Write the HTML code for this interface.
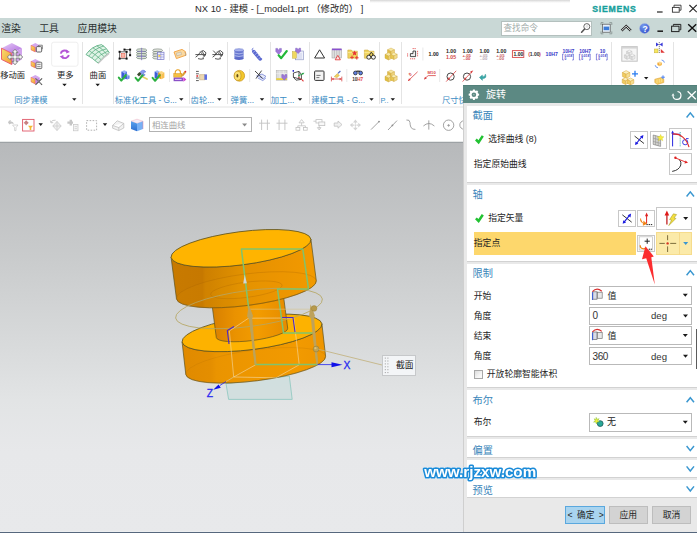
<!DOCTYPE html>
<html lang="zh-CN"><head><meta charset="utf-8"><title>NX 10</title>
<style>
html,body{margin:0;padding:0}
body{width:697px;height:533px;overflow:hidden;position:relative;background:#fff;
 font-family:"Liberation Sans","Noto Sans CJK SC",sans-serif;font-size:9px;color:#222;line-height:1}
#root{position:absolute;left:0;top:0;width:697px;height:533px;overflow:hidden}
.a{position:absolute;white-space:nowrap}
svg{position:absolute;left:0;top:0;overflow:visible}
#menubar{left:0;top:18px;width:697px;height:20.6px;background:#c9d8d6}
#menubar span{position:absolute;top:6px;font-size:9.8px;color:#2a3030}
#ribbon{left:0;top:38px;width:697px;height:68px;background:#fff}
#ribsep{left:0;top:105.6px;width:697px;height:2.6px;background:#f1f1f1}
#toolbar{left:0;top:108px;width:697px;height:33px;background:#fff}
#view{left:0;top:143px;width:697px;height:390px;
 background:linear-gradient(to bottom,#b7b9bb 0%,#c8cacb 27.5%,#d9dbdc 53%,#e2e4e5 66%,#e7e8ea 79%,#e8e9eb 100%)}
.glabel{position:absolute;font-size:8.3px;color:#3b8cc4;top:96.4px;white-space:nowrap}
.rl{position:absolute;font-size:8.3px;color:#222;top:71.4px;white-space:nowrap}
.gsep{position:absolute;top:42px;width:1px;height:61.5px;background:#e4e4e4}
.tri{position:absolute;width:0;height:0;border-left:3px solid transparent;border-right:3px solid transparent;border-top:3px solid #222}

#dlg{left:463px;top:85px;width:234px;height:447px;background:#e9e9e9;border-left:1px solid #cfcfcf;box-sizing:border-box}
#dhead{left:463px;top:85.3px;width:234px;height:17.8px;background:#5c8983;border-top:1px solid #52807a;box-sizing:border-box}
.sec{position:absolute;left:467.2px;width:230px;background:#fff;border-bottom:1px solid #d2d2d2;box-sizing:border-box}
.st{position:absolute;left:472.6px;font-size:10.2px;color:#3a86ba;white-space:nowrap}
.lb{position:absolute;font-size:8.8px;color:#242424;white-space:nowrap}
.box{position:absolute;left:589px;width:103px;border:1px solid #b9b9b9;box-sizing:border-box;background:#fff}
.btn{position:absolute;border:1px solid #c8c8c8;box-sizing:border-box;background:#fff}
</style></head>
<body>
<div id="root">
<div class="a" id="titlebar" style="left:0;top:0;width:697px;height:18px;background:#fff"></div>
<div class="a" style="left:370px;top:0;width:200px;height:3px;background:linear-gradient(to bottom,#d6d6d6,#f2f2f2 60%,#fff)"></div>
<div class="a" id="ttl" style="left:195px;top:4px;font-size:9.4px;color:#2a2a2a">NX 10 - 建模 - [_model1.prt （修改的） ]</div>
<div class="a" id="siem" style="left:592.3px;top:4.8px;font-size:8.7px;font-weight:bold;color:#17a09c;letter-spacing:0.75px;-webkit-text-stroke:0.35px #17a09c">SIEMENS</div>
<div class="a" id="menubar"><span style="left:1.3px">渲染</span><span style="left:39.3px">工具</span><span style="left:77.6px">应用模块</span></div>
<div class="a" id="ribbon"></div><div class="a" id="ribsep"></div><div class="a" id="toolbar"></div>
<div class="a" style="left:501px;top:20.5px;width:91px;height:15.5px;background:#fff;border:1px solid #b4c0be;box-sizing:border-box"></div>
<div class="a" style="left:503.5px;top:24px;font-size:8.6px;color:#a0aaa8">查找命令</div>
<div class="glabel" style="left:14.3px">同步建模</div>
<div class="glabel" style="left:114.7px">标准化工具 - G...</div>
<div class="glabel" style="left:190.6px">齿轮...</div>
<div class="glabel" style="left:230.6px">弹簧...</div>
<div class="glabel" style="left:270.8px">加工...</div>
<div class="glabel" style="left:311.2px">建模工具 - G...</div>
<div class="glabel" style="left:442px">尺寸快速</div>
<div class="glabel" style="left:380.4px;font-size:7.4px;top:97px">P..</div>
<div class="gsep" style="left:82px"></div>
<div class="gsep" style="left:113px"></div>
<div class="gsep" style="left:189px"></div>
<div class="gsep" style="left:227.4px"></div>
<div class="gsep" style="left:270px"></div>
<div class="gsep" style="left:308.5px"></div>
<div class="gsep" style="left:379.4px"></div>
<div class="gsep" style="left:401px"></div>
<div class="gsep" style="left:611.3px"></div>
<div class="gsep" style="left:673.4px"></div>
<div class="rl" style="left:0.2px">移动面</div>
<div class="rl" style="left:57px">更多</div>
<div class="rl" style="left:89.6px">曲面</div>
<div class="a" style="left:149px;top:117px;width:102.5px;height:15px;border:1px solid #b2b2b2;box-sizing:border-box;background:#fff"></div>
<div class="a" style="left:152px;top:120.5px;font-size:8.4px;color:#a4a4a4">相连曲线</div>
<svg width="697" height="145" viewBox="0 0 697 145">
<defs>
<linearGradient id="pt" x1="0" y1="0" x2="1" y2="1"><stop offset="0" stop-color="#e6ccf6"/><stop offset="1" stop-color="#b06ce0"/></linearGradient>
<linearGradient id="pl" x1="0" y1="0" x2="1" y2="1"><stop offset="0" stop-color="#f7e070"/><stop offset="1" stop-color="#f09a30"/></linearGradient>
<linearGradient id="pr" x1="0" y1="0" x2="1" y2="1"><stop offset="0" stop-color="#c48ae8"/><stop offset="1" stop-color="#dcb8f2"/></linearGradient>
<linearGradient id="bl" x1="0" y1="0" x2="0" y2="1"><stop offset="0" stop-color="#5aa2ee"/><stop offset="1" stop-color="#2f6fd0"/></linearGradient>
<radialGradient id="hp" cx="0.4" cy="0.3" r="0.8"><stop offset="0" stop-color="#7aa0f0"/><stop offset="1" stop-color="#2848c8"/></radialGradient>
</defs>
<polygon points="1.5,48.2 11.8,43.0 22.0,48.2 11.8,53.3" fill="url(#pt)"/><polygon points="1.5,48.2 11.8,53.3 11.8,64.5 1.5,59.4" fill="url(#pl)"/><polygon points="11.8,53.3 22.0,48.2 22.0,59.4 11.8,64.5" fill="url(#pr)"/>
<polygon points="1.5,48.2 11.7,53.3 11.7,64.5 1.5,59.4" fill="none" stroke="#e8506a" stroke-width="0.9"/>
<path d="M15 49.2 l3 3.4 h-1.9 v3.3 h3.3 v-1.9 l3.4 3 l-3.4 3 v-1.9 h-3.3 v3.3 h1.9 l-3 3.4 l-3-3.4 h1.9 v-3.3 h-3.3 v1.9 l-3.4-3 l3.4-3 v1.9 h3.3 v-3.3 h-1.9 z" fill="#f4f4f4" stroke="#7c7c7c" stroke-width="0.9" stroke-linejoin="round"/>
<polygon points="31.0,45.2 35.3,43.0 39.6,45.2 35.3,47.3" fill="#d4a8ee"/><polygon points="31.0,45.2 35.3,47.3 35.3,52.0 31.0,49.9" fill="url(#pl)"/><polygon points="35.3,47.3 39.6,45.2 39.6,49.9 35.3,52.0" fill="#c48ae8"/>
<polygon points="31,45.2 35.3,47.4 35.3,52.0 31,49.8" fill="none" stroke="#e8506a" stroke-width="0.5"/>
<rect x="36.3" y="46.6" width="5.4" height="5.4" rx="1" fill="#f6f6f6" stroke="#555" stroke-width="0.9"/>
<path d="M37.5 46.6 l1.2 -1.4 h3.6 v4" fill="none" stroke="#555" stroke-width="0.7"/>
<polygon points="31.0,61.2 35.3,59.0 39.6,61.2 35.3,63.3" fill="#d4a8ee"/><polygon points="31.0,61.2 35.3,63.3 35.3,68.0 31.0,65.9" fill="url(#pl)"/><polygon points="35.3,63.3 39.6,61.2 39.6,65.9 35.3,68.0" fill="#c48ae8"/>
<polygon points="31,61.2 35.3,63.4 35.3,68.0 31,65.8" fill="none" stroke="#e8506a" stroke-width="0.5"/>
<rect x="36" y="62.2" width="5.8" height="6.4" rx="0.8" fill="#f0f0f0" stroke="#666" stroke-width="0.9"/>
<path d="M37.2 64.4 h3.4 M37.2 66.6 h3.4" stroke="#777" stroke-width="0.8"/>
<polygon points="31.0,77.2 35.3,75.0 39.6,77.2 35.3,79.3" fill="#d4a8ee"/><polygon points="31.0,77.2 35.3,79.3 35.3,84.0 31.0,81.9" fill="url(#pl)"/><polygon points="35.3,79.3 39.6,77.2 39.6,81.9 35.3,84.0" fill="#c48ae8"/>
<polygon points="31,77.2 35.3,79.4 35.3,84.0 31,81.8" fill="none" stroke="#e8506a" stroke-width="0.5"/>
<path d="M35.5 78.4 l6.6 6.4 M42.1 78.4 l-6.6 6.4" stroke="#555" stroke-width="1.1"/>
<path d="M36.5 79.4 l4.6 4.4" stroke="#bbb" stroke-width="0.5"/>
<rect x="51.6" y="42.2" width="26.4" height="24" rx="2.2" fill="#fff" stroke="#ececec" stroke-width="0.9"/>
<path d="M60.8 53.6 a3.9 3.6 0 0 1 6.4 -2.2" fill="none" stroke="#b455d6" stroke-width="1.9"/>
<polygon points="66.2,49.4 69.9,52 66.2,53.6" fill="#b455d6"/>
<path d="M68.8 55 a3.9 3.6 0 0 1 -6.4 2.2" fill="none" stroke="#b455d6" stroke-width="1.9"/>
<polygon points="63.4,59.2 59.7,56.6 63.4,55" fill="#b455d6"/>
<polygon points="62.3,83.7 66.7,83.7 64.5,86.3" fill="#1a1a1a"/>
<polygon points="72.1,98.2 76.5,98.2 74.3,100.8" fill="#1a1a1a"/>
<path d="M86 54.5 Q92 46 101.5 44.6 Q106 47 109.3 52.6 Q104 56 98 63 Q92.5 58 86 54.5 Z" fill="#dff3e6" stroke="#4fa878" stroke-width="0.8" stroke-linejoin="round"/>
<path d="M89.2 50.8 Q95 54 101 59.6 M92.8 47.8 Q99 51 104 56.6 M96.8 45.8 Q102.5 48.6 106.8 54.4 M88.8 56 Q94.5 48.5 103.8 45.9 M91.8 58 Q97 51 106 49 M95 60.4 Q100 54 108 51" fill="none" stroke="#4fa878" stroke-width="0.7"/>
<path d="M98 63 Q104 56 109.3 52.6 L109.3 54.2 Q104 57.6 98.3 64.3 Z" fill="#c8c8c8"/>
<polygon points="95.5,83.7 99.9,83.7 97.7,86.3" fill="#1a1a1a"/>
<rect x="121.2" y="53.6" width="3.8" height="3.6" fill="#f8b8a8" stroke="#e86050" stroke-width="0.6"/>
<path d="M119.6 51.8 h7 v6.8 h-7 z M124.5 49.6 h5.6 v5.6" fill="none" stroke="#222" stroke-width="0.7"/>
<rect x="118.6" y="50.8" width="2" height="2" fill="#111"/>
<rect x="125.6" y="50.8" width="2" height="2" fill="#111"/>
<rect x="118.6" y="57.6" width="2" height="2" fill="#111"/>
<rect x="125.6" y="57.6" width="2" height="2" fill="#111"/>
<rect x="123.5" y="48.6" width="2" height="2" fill="#111"/>
<rect x="129.1" y="48.6" width="2" height="2" fill="#111"/>
<rect x="129.1" y="54.2" width="2" height="2" fill="#111"/>
<ellipse cx="141.6" cy="50.2" rx="5.2" ry="1.5" fill="#dfe6dc" stroke="#5a7060" stroke-width="0.6"/>
<ellipse cx="141.6" cy="52.6" rx="5.2" ry="1.5" fill="#dfe6dc" stroke="#5a7060" stroke-width="0.6"/>
<ellipse cx="141.6" cy="55.0" rx="5.2" ry="1.5" fill="#dfe6dc" stroke="#5a7060" stroke-width="0.6"/>
<ellipse cx="141.6" cy="57.4" rx="5.2" ry="1.5" fill="#dfe6dc" stroke="#5a7060" stroke-width="0.6"/>
<path d="M141.6 47.8 v12.4" stroke="#7868c0" stroke-width="0.7"/>
<path d="M137 51.6 h9.2 M137 56.4 h9.2" stroke="#6a58c8" stroke-width="0.4"/>
<ellipse cx="157.6" cy="50.4" rx="5" ry="1.5" fill="#e4e8e2" stroke="#687468" stroke-width="0.6"/>
<ellipse cx="157.6" cy="52.8" rx="5" ry="1.5" fill="#e4e8e2" stroke="#687468" stroke-width="0.6"/>
<ellipse cx="157.6" cy="55.2" rx="5" ry="1.5" fill="#e4e8e2" stroke="#687468" stroke-width="0.6"/>
<ellipse cx="157.6" cy="57.6" rx="5" ry="1.5" fill="#e4e8e2" stroke="#687468" stroke-width="0.6"/>
<rect x="157.6" y="52.2" width="6.4" height="7.4" fill="#eef0ff" stroke="#7878c8" stroke-width="0.7"/>
<path d="M157.6 54.6 h6.4 M157.6 57 h6.4 M160.8 52.2 v7.4" stroke="#7878c8" stroke-width="0.5"/>
<rect x="158.4" y="55" width="2" height="1.8" fill="#f0d040"/>
<rect x="169" y="47.5" width="1" height="13" fill="#e8e8e8"/>
<path d="M174 52 l8 -2.6 l3.4 2.2 l0.6 3.6 l-9.6 3.4 z" fill="#fbd9a0" stroke="#f0a040" stroke-width="0.9" stroke-linejoin="round"/>
<rect x="176.4" y="52.6" width="5" height="2.6" fill="#e8e0d0" stroke="#b0a080" stroke-width="0.4" transform="rotate(-16 178.9 53.9)"/>
<path d="M184.6 52.4 q1.6 1 1 3.6" fill="none" stroke="#999" stroke-width="0.6"/>
<polygon points="121.4,71.6 124.2,70.2 127.0,71.6 124.2,73.0" fill="#9ab4f4"/><polygon points="121.4,71.6 124.2,73.0 124.2,79.6 121.4,78.2" fill="#3c5cd8"/><polygon points="124.2,73.0 127.0,71.6 127.0,78.2 124.2,79.6" fill="#6080e6"/>
<polygon points="125.0,75.4 127.3,74.2 129.6,75.4 127.3,76.5" fill="#9ab4f4"/><polygon points="125.0,75.4 127.3,76.5 127.3,79.6 125.0,78.5" fill="#4464dc"/><polygon points="127.3,76.5 129.6,75.4 129.6,78.5 127.3,79.6" fill="#6a8aea"/>
<path d="M118.8 77.6 l2.5 3 l4.6 -5.6" fill="none" stroke="#2bb040" stroke-width="2.0" stroke-linecap="round" stroke-linejoin="round"/>
<path d="M141 76 l6 3" stroke="#e4d468" stroke-width="1.7" stroke-linecap="round"/>
<path d="M141.2 75.6 a3 3 0 1 1 4.6 -3.6 l-2 0.4 l-0.2 1.6 l1.6 0.8 a3 3 0 0 1 -4 0.8 z" fill="#8c9cf0" stroke="#5068d0" stroke-width="0.5"/>
<path d="M137 74.4 l2.4 -2.4 l2 1.8 l-2.4 2.6 z" fill="#3c4c30"/>
<path d="M135.6 77.8 l2.5 3 l4.6 -5.6" fill="none" stroke="#2bb040" stroke-width="2.0" stroke-linecap="round" stroke-linejoin="round"/>
<polygon points="154.6,71.5 157.1,70.2 159.6,71.5 157.1,72.7" fill="#9ab4f4"/><polygon points="154.6,71.5 157.1,72.7 157.1,79.2 154.6,78.0" fill="#3c5cd8"/><polygon points="157.1,72.7 159.6,71.5 159.6,78.0 157.1,79.2" fill="#6080e6"/>
<polygon points="158.2,72.5 161.3,71.0 164.4,72.5 161.3,74.1" fill="#fbd680"/><polygon points="158.2,72.5 161.3,74.1 161.3,79.2 158.2,77.7" fill="#f0a020"/><polygon points="161.3,74.1 164.4,72.5 164.4,77.7 161.3,79.2" fill="#f8c050"/>
<path d="M152.6 77.8 l2.5 3 l4.6 -5.6" fill="none" stroke="#2bb040" stroke-width="2.0" stroke-linecap="round" stroke-linejoin="round"/>
<rect x="169" y="69" width="1" height="13" fill="#e8e8e8"/>
<path d="M175.2 74 v-1.6 a2.6 2.6 0 0 1 5.2 0 v1.6" fill="none" stroke="#e8a020" stroke-width="1.1"/>
<rect x="173.8" y="73.6" width="8" height="3.6" fill="#f4c040" stroke="#d89018" stroke-width="0.5"/>
<path d="M181.6 75.2 l3 -3.6 l1.2 1 l-3 3.6 z" fill="#e8a830" stroke="#b07010" stroke-width="0.4"/>
<circle cx="185.4" cy="71.6" r="0.9" fill="#e03030"/>
<rect x="173.6" y="77.6" width="9.6" height="3.6" fill="#8a50c8"/>
<path d="M175 79.4 h6.6" stroke="#e8d8f8" stroke-width="1"/>
<polygon points="183.4,77 186.4,79.4 183.4,81.8" fill="#d040d0"/>
<polygon points="179.1,98.2 183.5,98.2 181.3,100.8" fill="#1a1a1a"/>
<path d="M195.6 57.2 q2.4 -1.2 4.2 -4.4 q1.2 -2 3.6 -2.2 l2.6 2.2 q-0.4 3.6 -3.4 5 M195.4 54.6 h10.4 M198.0 58.6 q3 1.2 6 0" fill="none" stroke="#2a2a2a" stroke-width="0.8"/>
<path d="M200.2 51.6 l3.6 4.4 M202.0 51 l2.8 5" stroke="#555" stroke-width="0.9"/>
<path d="M212.6 57.2 q2.4 -1.2 4.2 -4.4 q1.2 -2 3.6 -2.2 l2.6 2.2 q-0.4 3.6 -3.4 5 M212.4 54.6 h10.4 M215.0 58.6 q3 1.2 6 0" fill="none" stroke="#2a2a2a" stroke-width="0.8"/>
<path d="M217.2 51.6 l3.6 4.4 M219.0 51 l2.8 5" stroke="#555" stroke-width="0.9"/>
<path d="M213.2 50.6 l3.2 3.4" stroke="#2a2a2a" stroke-width="0.8"/>
<path d="M196 71.4 h2.8 M196 73.8 h2.8 M196 78 h2.8 M196 80.6 h2.8" stroke="#333" stroke-width="0.8"/>
<rect x="196.4" y="75.2" width="1.8" height="1.6" fill="#e03030"/>
<path d="M199.6 74.6 h5.4 v5.2 h-5.4 z" fill="#ecd8b0" stroke="#c0a070" stroke-width="0.5"/>
<rect x="204.4" y="74.4" width="2.6" height="5.4" fill="#6070e0"/>
<polygon points="217.2,98.2 221.6,98.2 219.4,100.8" fill="#1a1a1a"/>
<rect x="234.4" y="50.2" width="9.2" height="8.4" fill="#6878d0"/>
<ellipse cx="239" cy="50.2" rx="4.6" ry="1.5" fill="#aab4ee" stroke="#5060c0" stroke-width="0.5"/>
<path d="M234.4 53 q4.6 1.8 9.2 0 M234.4 55.6 q4.6 1.8 9.2 0 M234.4 58.2 q4.6 1.8 9.2 0" fill="none" stroke="#c8d0f6" stroke-width="0.7"/>
<ellipse cx="239" cy="58.6" rx="4.6" ry="1.4" fill="#5a68c8"/>
<path d="M253.8 51.6 l6.2 7.4" stroke="#5a68d0" stroke-width="3.4" stroke-linecap="round"/>
<path d="M253 52.6 l2.6 -2 M254.8 54.8 l2.6 -2 M256.6 57 l2.6 -2 M258.4 59 l2.4 -1.8" stroke="#c0c8f4" stroke-width="0.6"/>
<path d="M252.4 50.6 q-1.2 -2 1 -2.4 M260.6 59.6 q1.6 1 1 -1.4" fill="none" stroke="#5a68d0" stroke-width="0.8"/>
<ellipse cx="239.4" cy="75.8" rx="5.2" ry="5.4" fill="#f3c82c" stroke="#c89018" stroke-width="0.7"/>
<ellipse cx="237.6" cy="75.8" rx="3.4" ry="4.6" fill="#fbe070" stroke="#b88818" stroke-width="0.6"/>
<ellipse cx="237.4" cy="75.8" rx="1" ry="1.8" fill="#604818"/>
<rect x="249.2" y="69" width="1" height="13" fill="#e8e8e8"/>
<path d="M256.6 76 l7 2.6 l2.4 -2.2 l-4 -2.4 z M257.8 78 l5 2.6 l3 -2.4" fill="#e4e8fa" stroke="#6878d0" stroke-width="0.7"/>
<path d="M255 71 l7.6 7.4 M261.6 70.6 l-5.6 8" stroke="#333" stroke-width="0.9"/>
<polygon points="259.8,98.2 264.2,98.2 262.0,100.8" fill="#1a1a1a"/>
<path d="M275.8 48.4 h1.8 l1 2 l1 -2 h1.8 v3.2 l-2.8 2.8 l-2.8 -2.8 z" fill="#a078d8" stroke="#7050b8" stroke-width="0.4"/>
<path d="M278.6 55.2 l2.6 3 l5.6 -7.2" fill="none" stroke="#22b838" stroke-width="2.1" stroke-linecap="round" stroke-linejoin="round"/>
<rect x="295.6" y="51" width="8" height="8.8" fill="#eef0fa" stroke="#8890c0" stroke-width="0.6"/>
<path d="M297 54 h5 M297 56 h5 M297 58 h5" stroke="#a8b0d8" stroke-width="0.5"/>
<rect x="292.4" y="51.6" width="4" height="6.6" fill="#f0d860" stroke="#b8a030" stroke-width="0.4"/>
<path d="M295.6 48.2 h1.6 l0.9 1.8 l0.9 -1.8 h1.6 v3 l-2.5 2.4 l-2.5 -2.4 z" fill="#a078d8" stroke="#7050b8" stroke-width="0.4"/>
<rect x="276.2" y="70.6" width="10.8" height="9.6" fill="#dcdcdc" stroke="#aaa" stroke-width="0.5"/>
<path d="M276.2 73.6 h10.8 M279.8 70.6 v9.6 M283.4 70.6 v9.6" stroke="#f4f4f4" stroke-width="0.6"/>
<rect x="276.2" y="78.2" width="10.8" height="1.8" fill="#e8d040"/>
<path d="M281.8 74.6 h1.6 l0.9 1.8 l0.9 -1.8 h1.6 v3 l-2.5 2.6 l-2.5 -2.6 z" fill="#a078d8" stroke="#7050b8" stroke-width="0.4"/>
<path d="M293.4 73 l5.6 -1.6 v7.4 l-5.6 -1.6 z M299 71.4 l2.4 3 v5 l-2.4 -0.6 M293.4 77.2 l2.6 3 l5.4 -0.8" fill="none" stroke="#2a2a2a" stroke-width="0.8" stroke-linejoin="round"/>
<path d="M298 76 l5 -2.4" stroke="#20a040" stroke-width="0.9"/><polygon points="304.4,72.8 301.8,73 302.8,75" fill="#20a040"/>
<path d="M298 77 l4.6 3.2" stroke="#e04040" stroke-width="0.9"/><polygon points="304,81.4 301.6,81 302.8,79.2" fill="#e04040"/>
<rect x="292.6" y="70" width="1.4" height="1.8" fill="#3030d0"/>
<polygon points="297.8,98.2 302.2,98.2 300.0,100.8" fill="#1a1a1a"/>
<polygon points="319.6,49.8 324.6,58 314.6,58" fill="#fff" stroke="#333" stroke-width="1"/>
<rect x="332" y="49" width="9.6" height="9" fill="#e2e2e2" stroke="#999" stroke-width="0.5"/>
<path d="M334.4 50 v8 M336.8 50 v8 M339.2 50 v8" stroke="#a8a8a8" stroke-width="0.6"/>
<rect x="332" y="48.6" width="9.6" height="1.6" fill="#8a50d0"/>
<polygon points="337.8,55.4 340.4,59.8 335.2,59.8" fill="#ffe0e0" stroke="#e03030" stroke-width="0.8"/>
<path d="M347.8 50 h3.6 l1 1.2 h5 v7 h-9.6 z" fill="#f0d460" stroke="#c8a030" stroke-width="0.5"/>
<path d="M347.8 52.6 h9.6" stroke="#fbeca0" stroke-width="0.8"/>
<path d="M364.4 50 h3.6 l1 1.2 h5 v7 h-9.6 z" fill="#f0d460" stroke="#c8a030" stroke-width="0.5"/>
<path d="M364.4 52.6 h9.6" stroke="#fbeca0" stroke-width="0.8"/>
<path d="M354.6 50.4 l0.8 1.8 l1.9 0.1 l-1.5 1.3 l0.5 1.9 l-1.7 -1 l-1.7 1 l0.5 -1.9 l-1.5 -1.3 l1.9 -0.1 z" fill="#e83030"/>
<path d="M352 55.6 v3.6 M350.2 57.4 h3.6 M356.8 56 v3.6 M355 57.800000000000004 h3.6" stroke="#e83030" stroke-width="0.9"/>
<circle cx="368.8" cy="57.2" r="2" fill="#f4f4f4" stroke="#222" stroke-width="0.9"/><circle cx="373.4" cy="57.2" r="2" fill="#f4f4f4" stroke="#222" stroke-width="0.9"/>
<path d="M369.4 55.2 l1.4 -2.6 h1 l1.4 2.6" fill="none" stroke="#222" stroke-width="0.9"/>
<rect x="314.6" y="71" width="9.4" height="9.4" rx="0.8" fill="#f4f4f4" stroke="#333" stroke-width="1"/>
<path d="M316.4 75.4 h4.2 M316.4 77.6 h3" stroke="#777" stroke-width="1"/>
<path d="M331.4 76.6 v4.8 M341.8 76.6 v4.8 M331.4 79 h10.4" stroke="#d84848" stroke-width="0.8"/>
<polygon points="331.6,79 333.6,77.8 333.6,80.2" fill="#d84848"/><polygon points="341.6,79 339.6,77.8 339.6,80.2" fill="#d84848"/>
<path d="M334.2 76.6 l3.2 -3 l2 1.8 l-2.6 2.4 z" fill="#f0d060" stroke="#c0a030" stroke-width="0.4"/>
<path d="M338 73.4 l2.4 -2.4" stroke="#5068c0" stroke-width="1.2"/>
<rect x="346.3" y="69" width="1" height="13" fill="#e8e8e8"/>
<circle cx="355.4" cy="73" r="1.9" fill="#6080e0" stroke="#222" stroke-width="0.7"/><circle cx="360.6" cy="73" r="1.9" fill="#6080e0" stroke="#222" stroke-width="0.7"/>
<path d="M356.4 71.2 h3.4" stroke="#222" stroke-width="1.2"/>
<text x="352.2" y="80.6" font-family="Liberation Sans, sans-serif" font-size="4.6" font-weight="bold" fill="#333" >10</text>
<text x="357.2" y="80.6" font-family="Liberation Sans, sans-serif" font-size="4.6" font-weight="bold" fill="#e04040" >H7</text>
<polygon points="369.3,98.2 373.7,98.2 371.5,100.8" fill="#1a1a1a"/>
<polygon points="387.5,49.8 391.0,48.0 394.5,49.8 391.0,51.5" fill="#f7e9a4" stroke="#c9a23a" stroke-width="0.4" stroke-linejoin="round"/><polygon points="387.5,49.8 391.0,51.5 391.0,55.4 387.5,53.6" fill="#e3bd48" stroke="#c9a23a" stroke-width="0.4" stroke-linejoin="round"/><polygon points="391.0,51.5 394.5,49.8 394.5,53.6 391.0,55.4" fill="#efd47a" stroke="#c9a23a" stroke-width="0.4" stroke-linejoin="round"/><polygon points="385.0,54.4 388.5,52.6 392.0,54.4 388.5,56.1" fill="#f7e9a4" stroke="#c9a23a" stroke-width="0.4" stroke-linejoin="round"/><polygon points="385.0,54.4 388.5,56.1 388.5,60.0 385.0,58.2" fill="#e0c040" stroke="#c9a23a" stroke-width="0.4" stroke-linejoin="round"/><polygon points="388.5,56.1 392.0,54.4 392.0,58.2 388.5,60.0" fill="#efd47a" stroke="#c9a23a" stroke-width="0.4" stroke-linejoin="round"/><polygon points="390.6,54.3 393.9,52.6 397.2,54.3 393.9,55.9" fill="#f9edb0" stroke="#c9a23a" stroke-width="0.4" stroke-linejoin="round"/><polygon points="390.6,54.3 393.9,55.9 393.9,59.5 390.6,57.9" fill="#e8c850" stroke="#c9a23a" stroke-width="0.4" stroke-linejoin="round"/><polygon points="393.9,55.9 397.2,54.3 397.2,57.9 393.9,59.5" fill="#f3dc8c" stroke="#c9a23a" stroke-width="0.4" stroke-linejoin="round"/>
<polygon points="387.5,71.8 391.0,70.0 394.5,71.8 391.0,73.5" fill="#f7e9a4" stroke="#c9a23a" stroke-width="0.4" stroke-linejoin="round"/><polygon points="387.5,71.8 391.0,73.5 391.0,77.3 387.5,75.6" fill="#e3bd48" stroke="#c9a23a" stroke-width="0.4" stroke-linejoin="round"/><polygon points="391.0,73.5 394.5,71.8 394.5,75.6 391.0,77.3" fill="#efd47a" stroke="#c9a23a" stroke-width="0.4" stroke-linejoin="round"/><polygon points="385.0,76.4 388.5,74.6 392.0,76.4 388.5,78.1" fill="#f7e9a4" stroke="#c9a23a" stroke-width="0.4" stroke-linejoin="round"/><polygon points="385.0,76.4 388.5,78.1 388.5,81.9 385.0,80.2" fill="#e0c040" stroke="#c9a23a" stroke-width="0.4" stroke-linejoin="round"/><polygon points="388.5,78.1 392.0,76.4 392.0,80.2 388.5,81.9" fill="#efd47a" stroke="#c9a23a" stroke-width="0.4" stroke-linejoin="round"/><polygon points="390.6,76.3 393.9,74.6 397.2,76.3 393.9,77.9" fill="#f9edb0" stroke="#c9a23a" stroke-width="0.4" stroke-linejoin="round"/><polygon points="390.6,76.3 393.9,77.9 393.9,81.5 390.6,79.9" fill="#e8c850" stroke="#c9a23a" stroke-width="0.4" stroke-linejoin="round"/><polygon points="393.9,77.9 397.2,76.3 397.2,79.9 393.9,81.5" fill="#f3dc8c" stroke="#c9a23a" stroke-width="0.4" stroke-linejoin="round"/>
<polygon points="390.6,98.2 395.0,98.2 392.8,100.8" fill="#1a1a1a"/>
<path d="M410.4 56.6 v-3 h2.6 v-2.6 h2.6 v5.600000000000001 z" fill="#f0f0f0" stroke="#222" stroke-width="0.8"/>
<path d="M412.6 48.6 h3.4 M417.6 50.8 v6 M410 58.8 h5.8 M407.6 53.4 v3.4" stroke="#e03838" stroke-width="0.8" stroke-dasharray="1.2 0.7"/>
<rect x="422.4" y="47.5" width="1" height="13" fill="#e8e8e8"/>
<text x="428.6" y="56.2" font-family="Liberation Sans, sans-serif" font-size="5.2" font-weight="bold" fill="#222" >1.00</text>
<text x="446.0" y="53.2" font-family="Liberation Sans, sans-serif" font-size="5.2" font-weight="bold" fill="#222" >1.00</text>
<text x="446.0" y="59.0" font-family="Liberation Sans, sans-serif" font-size="5.2" font-weight="bold" fill="#d04848" >1.05</text>
<text x="462.6" y="53.0" font-family="Liberation Sans, sans-serif" font-size="5.2" font-weight="bold" fill="#222" >1.00</text>
<text x="462.6" y="56.8" font-family="Liberation Sans, sans-serif" font-size="4.2" font-weight="bold" fill="#d04848" >+.05</text>
<text x="463.2" y="60.2" font-family="Liberation Sans, sans-serif" font-size="4.2" font-weight="bold" fill="#d04848" >-.00</text>
<text x="479.4" y="53.0" font-family="Liberation Sans, sans-serif" font-size="5.2" font-weight="bold" fill="#222" >1.00</text>
<text x="479.4" y="56.8" font-family="Liberation Sans, sans-serif" font-size="4.2" font-weight="bold" fill="#b8a8b0" >+.05</text>
<text x="480.0" y="60.2" font-family="Liberation Sans, sans-serif" font-size="4.2" font-weight="bold" fill="#b8a8b0" >-.00</text>
<text x="496.2" y="53.0" font-family="Liberation Sans, sans-serif" font-size="5.2" font-weight="bold" fill="#222" >1.00</text>
<text x="496.2" y="56.8" font-family="Liberation Sans, sans-serif" font-size="4.2" font-weight="bold" fill="#c86060" >+.05</text>
<text x="496.8" y="60.2" font-family="Liberation Sans, sans-serif" font-size="4.2" font-weight="bold" fill="#c86060" >-.00</text>
<rect x="512.4" y="50.6" width="11.4" height="6.8" fill="#fff" stroke="#d84848" stroke-width="0.9"/>
<text x="513.6" y="56.2" font-family="Liberation Sans, sans-serif" font-size="5" font-weight="bold" fill="#222" >1.00</text>
<text x="528.2" y="56.2" font-family="Liberation Sans, sans-serif" font-size="5.6" font-weight="bold" fill="#d84848" >(</text>
<text x="529.8" y="56.2" font-family="Liberation Sans, sans-serif" font-size="5" font-weight="bold" fill="#333" >1.00</text>
<text x="539.0" y="56.2" font-family="Liberation Sans, sans-serif" font-size="5.6" font-weight="bold" fill="#d84848" >)</text>
<text x="545.6" y="56.2" font-family="Liberation Sans, sans-serif" font-size="5.2" font-weight="bold" fill="#3838c8" >10H7</text>
<text x="562.4" y="53.0" font-family="Liberation Sans, sans-serif" font-size="5" font-weight="bold" fill="#3838c8" >10H7</text>
<path d="M563.8 54 h-1.2 v6 h1.2 M572.2 54 h1.2 v6 h-1.2" fill="none" stroke="#4040c8" stroke-width="0.6"/>
<text x="564.4" y="57.0" font-family="Liberation Sans, sans-serif" font-size="3.2" font-weight="bold" fill="#4040c8" >0.018</text>
<text x="564.4" y="59.8" font-family="Liberation Sans, sans-serif" font-size="3.2" font-weight="bold" fill="#4040c8" >0</text>
<text x="579.2" y="53.0" font-family="Liberation Sans, sans-serif" font-size="5" font-weight="bold" fill="#3838c8" >10H7</text>
<path d="M580.6 54 h-1.2 v6 h1.2 M589.0 54 h1.2 v6 h-1.2" fill="none" stroke="#4040c8" stroke-width="0.6"/>
<text x="581.2" y="57.0" font-family="Liberation Sans, sans-serif" font-size="3.2" font-weight="bold" fill="#4040c8" >0.018</text>
<text x="581.2" y="59.8" font-family="Liberation Sans, sans-serif" font-size="3.2" font-weight="bold" fill="#4040c8" >0</text>
<text x="599.8" y="53.0" font-family="Liberation Sans, sans-serif" font-size="5" font-weight="bold" fill="#3838c8" >10</text>
<path d="M597.6 54 h-1.2 v6 h1.2 M606.0 54 h1.2 v6 h-1.2" fill="none" stroke="#4040c8" stroke-width="0.6"/>
<text x="598.2" y="57.0" font-family="Liberation Sans, sans-serif" font-size="3.2" font-weight="bold" fill="#4040c8" >0.018</text>
<text x="598.2" y="59.8" font-family="Liberation Sans, sans-serif" font-size="3.2" font-weight="bold" fill="#4040c8" >0</text>
<path d="M408.2 80.8 l9.4 -9" stroke="#d84040" stroke-width="0.8"/><polygon points="408,81 409,78.2 410.8,80" fill="#d84040"/>
<text x="409.6" y="75.6" font-family="Liberation Sans, sans-serif" font-size="4.4" font-weight="bold" fill="#d84040" transform="rotate(-40 411 75)">0</text>
<path d="M424.6 78.8 l3.6 -3.2 h7.6" fill="none" stroke="#d84040" stroke-width="0.8"/><polygon points="424,79.4 425,76.8 426.8,78.6" fill="#d84040"/>
<text x="427.6" y="74.4" font-family="Liberation Sans, sans-serif" font-size="4.2" font-weight="bold" fill="#d84040" >M10</text>
<rect x="439.2" y="69" width="1" height="13" fill="#e8e8e8"/>
<circle cx="450.6" cy="76.6" r="3.6" fill="#fff" stroke="#333" stroke-width="0.9"/>
<path d="M446.2 81.6 l10 -10.8" stroke="#d84040" stroke-width="0.8"/>
<polygon points="447.6,79.8 448.6,77.2 450.2,79" fill="#d84040"/>
<circle cx="467.0" cy="76.6" r="3.6" fill="#fff" stroke="#333" stroke-width="0.9"/>
<path d="M462.6 81.6 l10 -10.8" stroke="#d84040" stroke-width="0.8"/>
<polygon points="464.0,79.8 465.0,77.2 466.6,79" fill="#d84040"/>
<polygon points="472.8,70.6 471.6,73.4 470.2,71.4" fill="#d84040"/>
<path d="M479.4 77.4 l3 -2.4 v1.6 q3 0 3 -2.6 q2 4.4 -3 4.8 v1.6 z" fill="#38a8a8" stroke="#2a9090" stroke-width="0.4"/>
<rect x="621.8" y="46.6" width="15.4" height="14.6" fill="#f6f6f6" stroke="#c2c2c2" stroke-width="1"/>
<rect x="621.8" y="46.6" width="15.4" height="2" fill="#d4d4d4"/>
<polygon points="626.6,51.4 629.3,50.0 632.0,51.4 629.3,52.7" fill="#f4f4f4" stroke="#c4c4c4" stroke-width="0.5" stroke-linejoin="round"/><polygon points="626.6,51.4 629.3,52.7 629.3,55.7 626.6,54.3" fill="#dcdcdc" stroke="#c4c4c4" stroke-width="0.5" stroke-linejoin="round"/><polygon points="629.3,52.7 632.0,51.4 632.0,54.3 629.3,55.7" fill="#eaeaea" stroke="#c4c4c4" stroke-width="0.5" stroke-linejoin="round"/>
<polygon points="624.4,55.0 627.1,53.6 629.8,55.0 627.1,56.3" fill="#f4f4f4" stroke="#c4c4c4" stroke-width="0.5" stroke-linejoin="round"/><polygon points="624.4,55.0 627.1,56.3 627.1,59.3 624.4,57.9" fill="#dcdcdc" stroke="#c4c4c4" stroke-width="0.5" stroke-linejoin="round"/><polygon points="627.1,56.3 629.8,55.0 629.8,57.9 627.1,59.3" fill="#eaeaea" stroke="#c4c4c4" stroke-width="0.5" stroke-linejoin="round"/>
<polygon points="629.4,55.4 632.2,54.0 635.0,55.4 632.2,56.8" fill="#f4f4f4" stroke="#c4c4c4" stroke-width="0.5" stroke-linejoin="round"/><polygon points="629.4,55.4 632.2,56.8 632.2,59.9 629.4,58.5" fill="#dcdcdc" stroke="#c4c4c4" stroke-width="0.5" stroke-linejoin="round"/><polygon points="632.2,56.8 635.0,55.4 635.0,58.5 632.2,59.9" fill="#eaeaea" stroke="#c4c4c4" stroke-width="0.5" stroke-linejoin="round"/>
<polygon points="622.4,72.5 626.1,70.6 629.8,72.5 626.1,74.3" fill="#fbf0c0" stroke="#d8a840" stroke-width="0.5" stroke-linejoin="round"/><polygon points="622.4,72.5 626.1,74.3 626.1,78.4 622.4,76.5" fill="#f0cc60" stroke="#d8a840" stroke-width="0.5" stroke-linejoin="round"/><polygon points="626.1,74.3 629.8,72.5 629.8,76.5 626.1,78.4" fill="#f6de90" stroke="#d8a840" stroke-width="0.5" stroke-linejoin="round"/>
<polygon points="622.2,79.3 625.5,77.6 628.8,79.3 625.5,80.9" fill="#fbf0c0" stroke="#d8a840" stroke-width="0.5" stroke-linejoin="round"/><polygon points="622.2,79.3 625.5,80.9 625.5,84.5 622.2,82.9" fill="#f0cc60" stroke="#d8a840" stroke-width="0.5" stroke-linejoin="round"/><polygon points="625.5,80.9 628.8,79.3 628.8,82.9 625.5,84.5" fill="#f6de90" stroke="#d8a840" stroke-width="0.5" stroke-linejoin="round"/>
<polygon points="627.2,79.7 630.5,78.0 633.8,79.7 630.5,81.3" fill="#fbf0c0" stroke="#d8a840" stroke-width="0.5" stroke-linejoin="round"/><polygon points="627.2,79.7 630.5,81.3 630.5,84.9 627.2,83.3" fill="#f0cc60" stroke="#d8a840" stroke-width="0.5" stroke-linejoin="round"/><polygon points="630.5,81.3 633.8,79.7 633.8,83.3 630.5,84.9" fill="#f6de90" stroke="#d8a840" stroke-width="0.5" stroke-linejoin="round"/>
<path d="M632 73.8 h6 M635 70.8 v6" stroke="#2a7cf0" stroke-width="1.3"/>
<polygon points="644.0,76.9 648.4,76.9 646.2,79.5" fill="#1a1a1a"/>
<polygon points="656,42.6 659,44.6 656,46.6" fill="#3838d8"/><polygon points="662.6,42.6 659.600000000000001,44.6 662.6,46.6" fill="#3838d8"/>
<path d="M659.3 42 v11" stroke="#444" stroke-width="0.7" stroke-dasharray="1.2 0.8"/>
<rect x="654.4" y="49" width="3.6" height="3.8" fill="#f6e860" stroke="#c8b030" stroke-width="0.5"/>
<polygon points="660.8,49 664.8,52.8 660.8,52.8" fill="#e03838"/>
<polygon points="657.4,62.6 659.7,61.4 662.0,62.6 659.7,63.7" fill="#fbd890"/><polygon points="657.4,62.6 659.7,63.7 659.7,66.2 657.4,65.1" fill="#f0a830"/><polygon points="659.7,63.7 662.0,62.6 662.0,65.1 659.7,66.2" fill="#f6c060"/>
<path d="M661.6 60 q2.4 0.2 2.8 2.6 M658 67.8 q-2.4 -0.2 -2.8 -2.6" fill="none" stroke="#4a80f0" stroke-width="0.8"/>
<path d="M654.8 79.2 l6.4 -1.6 l2.6 1.6 v3.4 l-6.4 1.8 l-2.6 -1.8 z" fill="#f6cc60" stroke="#d89c30" stroke-width="0.5"/>
<path d="M657 79.6 v3.6 M659.4 79 v3.6 M661.6 78.6 v3.6" stroke="#fbe8a8" stroke-width="0.6"/>
<path d="M663 75.4 v3.600000000000001 M661.2 77.2 h3.6" stroke="#4a80f0" stroke-width="1"/>
<path d="M657 12 h5.6" stroke="#333" stroke-width="1.3"/>
<path d="M674 7 v-1.8 h7 v5 h-1.8" fill="none" stroke="#333" stroke-width="0.9"/><rect x="672.4" y="7.4" width="6.8" height="4.8" fill="#fff" stroke="#333" stroke-width="0.9"/>
<path d="M689.4 5 l7.4 7.2 M696.8 5 l-7.4 7.2" stroke="#222" stroke-width="1.1"/>
<path d="M657.4 31.2 h5.6" stroke="#222" stroke-width="1.6"/>
<path d="M673.4 25.8 v-1.4 h7.4 v5.4 h-1.6" fill="none" stroke="#222" stroke-width="1"/><rect x="671.6" y="26.2" width="7.4" height="5.4" fill="#c9d8d6" stroke="#222" stroke-width="1"/>
<path d="M688.2 24.2 l8 7.600000000000001 M696.2 24.2 l-8 7.600000000000001" stroke="#111" stroke-width="1.4"/>
<circle cx="644.6" cy="28.4" r="5" fill="url(#hp)" stroke="#a8b8e0" stroke-width="0.5"/>
<text x="642.5" y="31.6" font-family="Liberation Sans, sans-serif" font-size="8.6" font-weight="bold" fill="#fff" >?</text>
<path d="M621.6 30.6 l4.6 -4.4 l4.6 4.4" fill="none" stroke="#222" stroke-width="2.4" stroke-linejoin="miter"/><path d="M621.6 30.6 l4.6 -4.4 l4.6 4.4" fill="none" stroke="#fff" stroke-width="0.9"/>
<path d="M601 25 v-2.400000000000002 h2.4 M609.4 22.6 h2.4 v2.4 M611.8 31.4 v2.4 h-2.4 M603.4 33.8 h-2.4 v-2.4" fill="none" stroke="#8a9694" stroke-width="0.9"/>
<rect x="602.6" y="24.2" width="7.6" height="8" fill="#e8f0fa" stroke="#555" stroke-width="0.7"/><rect x="603.6" y="26.6" width="5.6" height="3.6" fill="#3c7cd8"/>
<circle cx="586.8" cy="26.6" r="3" fill="#fff" stroke="#555" stroke-width="0.9"/><circle cx="587" cy="26.4" r="1.4" fill="#e4e4e4"/><path d="M584.6 29 l-3 3.2" stroke="#555" stroke-width="1.6" stroke-linecap="round"/>
<path d="M8 122.6 q0.400000000000001 -2.6 3 -2.6 l-0.6 1.6 q3 -0.6 3.4 2.4 q-2.4 -1.4 -4.4 0.4 z" fill="#c6c6c6"/>
<polygon points="12.6,125 18,125 16,127.6 16,130.6 14.6,130.6 14.6,127.6" fill="none" stroke="#c6c6c6" stroke-width="0.7"/>
<rect x="22.6" y="119.4" width="11.4" height="11.6" fill="#fff" stroke="#e05868" stroke-width="0.9"/>
<circle cx="26.2" cy="122.8" r="1.5" fill="#f0c0c0" stroke="#c04848" stroke-width="0.5"/><path d="M26.2 120.4 v4.8 M23.8 122.8 h4.8" stroke="#a05050" stroke-width="0.5"/>
<polygon points="28,125.8 33,125.8 31.3,127.8 31.3,130 29.7,130 29.7,127.8" fill="#f4b830"/>
<polygon points="38.5,123.3 42.9,123.3 40.7,125.9" fill="#1a1a1a"/>
<path d="M51 122.6 q0.6 -3 4.6 -2.4 M51 122.800000000000002 l-0.6 -2.2 M51 122.8 l2.2 -0.2" fill="none" stroke="#c6c6c6" stroke-width="0.9"/>
<polygon points="57,121.4 61.2,126 57,130.6 52.8,126" fill="#f0f0f0" stroke="#c6c6c6" stroke-width="0.7"/><path d="M52.8 126 h8.4 M57 121.4 v9.2" stroke="#c6c6c6" stroke-width="0.6"/>
<path d="M67.4 121.4 h5.6 v2.4 h-5.6 z M69.6 119.8 h2.4 v5.6 h-2.4z" fill="#c6c6c6"/>
<rect x="73.6" y="124.4" width="4.4" height="6.4" fill="#f4f4f4" stroke="#c6c6c6" stroke-width="0.7"/><path d="M74.6 126.6 h2.4 M74.6 128.6 h2.4" stroke="#c6c6c6" stroke-width="0.6"/>
<rect x="86.6" y="120.6" width="10" height="9.6" fill="none" stroke="#aaa" stroke-width="0.9" stroke-dasharray="1.6 1.4"/>
<polygon points="102.8,123.3 107.2,123.3 105.0,125.9" fill="#1a1a1a"/>
<path d="M112.6 125.4 l4.6 -4.6 l6.6 2.6 v4.6 l-5 2.6 l-6.2 -2.4 z M112.6 125.4 l6.2 2.2 l5 -4.2 M118.8 127.6 v3" fill="#f2f2f2" stroke="#b8b8b8" stroke-width="0.7" stroke-linejoin="round"/>
<polygon points="131,121.2 137,119.2 143,121.2 137,123.4" fill="#f4ecf6" stroke="#e8a0b0" stroke-width="0.4"/>
<polygon points="131,121.2 137,123.4 137,131.2 131,129" fill="url(#bl)"/>
<polygon points="137,123.4 143,121.2 143,129 137,131.2" fill="#78b0f4"/>
<path d="M143 121.2 v7.8" stroke="#e080a0" stroke-width="0.5"/>
<polygon points="242.1,123.5 247.1,123.5 244.6,126.5" fill="#8a8a8a"/>
<path d="M261.6 119.6 v10.4 M267.4 119.6 v10.4 M259.0 123.2 h11" fill="none" stroke="#c2c2c2" stroke-width="0.9"/>
<path d="M279.1 119.6 v10.4 M284.9 119.6 v10.4 M276.5 123.2 h11" fill="none" stroke="#c2c2c2" stroke-width="0.9"/>
<path d="M301.6 119.6 l2.6 3.2 h-5.2 z M301.6 122.8 v3 M297.8 127.6 v-1.8 h7.6 v1.8" fill="none" stroke="#c2c2c2" stroke-width="0.8"/>
<rect x="296" y="127.4" width="3.8" height="2.8" fill="none" stroke="#c2c2c2" stroke-width="0.8"/><rect x="303.400000000000002" y="127.4" width="3.8" height="2.8" fill="none" stroke="#c2c2c2" stroke-width="0.8"/>
<rect x="316" y="119.6" width="6" height="3.4" fill="none" stroke="#c2c2c2" stroke-width="0.8"/><rect x="318.8" y="122" width="6" height="3.6" fill="#f8f8f8" stroke="#c2c2c2" stroke-width="0.8"/>
<path d="M313.4 121.2 h2.6 M319.2 125.6 v3 M317.4 127.6 l1.8 2.4 l1.8 -2.4 z" fill="none" stroke="#c2c2c2" stroke-width="0.8"/>
<path d="M334.2 123 h3.8 v-2 l4 3.6 l-4 3.6 v-2 h-3.8 z" fill="#f0f0f0" stroke="#c2c2c2" stroke-width="0.8" stroke-linejoin="round"/>
<path d="M355.4 119.6 l2.4 2.8 h-4.8 z M355.4 130.6 l2.4 -2.8 h-4.8 z M349.8 125.1 l2.8 -2.4 v4.8 z M361 125.1 l-2.8 -2.4 v4.8 z" fill="#d4d4d4"/>
<path d="M355.4 122.4 v5.4 M352.6 125.1 h5.6" stroke="#c2c2c2" stroke-width="1.1" stroke-dasharray="1.1 0.9"/>
<path d="M371 129.6 l8 -8" stroke="#8c8c8c" stroke-width="0.8"/><circle cx="379" cy="121.6" r="0.9" fill="#8c8c8c"/>
<path d="M388 130 l9 -9.4" stroke="#8c8c8c" stroke-width="0.8"/><circle cx="392.4" cy="125.400000000000006" r="0.9" fill="#8c8c8c"/>
<path d="M406.4 120 q3.4 -0.6 3.6 2.6 q0 2.400000000000002 0.8 4.4 q1.2 2.8 4.6 2.4" fill="none" stroke="#8c8c8c" stroke-width="0.8"/>
<path d="M423.4 126 q5.4 -5 11 0 M428.800000000000004 120.4 v9.2" fill="none" stroke="#8c8c8c" stroke-width="0.8"/>
<circle cx="448.6" cy="125.2" r="5.2" fill="none" stroke="#8c8c8c" stroke-width="0.8"/><path d="M447.2 125.4 h2.8 M448.6 124 v2.8" stroke="#8c8c8c" stroke-width="0.7"/>
<circle cx="464" cy="125" r="4.2" fill="none" stroke="#8c8c8c" stroke-width="0.8"/>
</svg><div class="a" id="view"></div>
<div class="a" style="left:0;top:141px;width:697px;height:1px;background:#e6e8e8"></div>
<div class="a" style="left:0;top:142px;width:697px;height:1px;background:#9da2a5"></div>
<div class="a" style="left:0;top:531px;width:697px;height:1px;background:#eceef0"></div>
<div class="a" style="left:0;top:532px;width:697px;height:1px;background:#56677d"></div>
<svg width="697" height="533" viewBox="0 0 697 533">
<defs>
<linearGradient id="gs1" gradientUnits="userSpaceOnUse" x1="171" y1="0" x2="317" y2="0">
<stop offset="0" stop-color="#c87a00"/><stop offset="0.215" stop-color="#c67800"/><stop offset="0.235" stop-color="#cd7f00"/><stop offset="0.33" stop-color="#d48600"/><stop offset="0.47" stop-color="#e09000"/><stop offset="0.55" stop-color="#e69100"/><stop offset="0.75" stop-color="#ec9500"/><stop offset="0.9" stop-color="#f09800"/><stop offset="1" stop-color="#f29a00"/></linearGradient>
<linearGradient id="gs2" gradientUnits="userSpaceOnUse" x1="182" y1="0" x2="326" y2="0">
<stop offset="0" stop-color="#e08a00"/><stop offset="0.2" stop-color="#e48e00"/><stop offset="0.24" stop-color="#ea9400"/><stop offset="0.5" stop-color="#ee9700"/><stop offset="0.8" stop-color="#f29a00"/><stop offset="1" stop-color="#ee9500"/></linearGradient>
<linearGradient id="gn" gradientUnits="userSpaceOnUse" x1="213" y1="0" x2="287" y2="0">
<stop offset="0" stop-color="#d88000"/><stop offset="0.3" stop-color="#ea9200"/><stop offset="0.6" stop-color="#f39c00"/><stop offset="1" stop-color="#e68c00"/></linearGradient>
</defs>
<path d="M226 383.6 L289.3 376 L292.2 399.4 L228.6 399.4 Z" fill="#cfdede" fill-opacity="0.85" stroke="#8cc6be" stroke-width="0.8"/>
<path d="M182.09 341.98 L185.79 374.48 A70.50 15.50 -7.40 0 0 325.61 356.32 L321.91 323.82 A70.50 16.60 -7.40 0 1 182.09 341.98 Z" fill="url(#gs2)" stroke="#5c5220" stroke-width="0.7" stroke-linejoin="round"/>
<ellipse cx="252.00" cy="332.90" rx="70.50" ry="16.60" transform="rotate(-7.40 252.00 332.90)" fill="#fdb200" stroke="#5c5220" stroke-width="0.8"/>
<path d="M210.70 294.44 L216.30 337.54 A36.00 7.60 -7.40 0 0 287.70 328.26 L282.10 285.16 A36.00 7.60 -7.40 0 1 210.70 294.44 Z" fill="url(#gn)" stroke="#5c5220" stroke-width="0.7" stroke-linejoin="round"/>
<path d="M171.09 257.38 L176.49 298.88 A70.50 15.80 -7.40 0 0 316.31 280.72 L310.91 239.22 A70.50 16.60 -7.40 0 1 171.09 257.38 Z" fill="url(#gs1)" stroke="#5c5220" stroke-width="0.7" stroke-linejoin="round"/>
<ellipse cx="241.00" cy="248.30" rx="70.50" ry="16.60" transform="rotate(-7.40 241.00 248.30)" fill="#ffb400" stroke="#5c5220" stroke-width="0.8"/>
<ellipse cx="246.40" cy="289.80" rx="70.50" ry="15.80" transform="rotate(-7.40 246.40 289.80)" fill="#f0a000" fill-opacity="0.1" stroke="#a86400" stroke-width="0.6" stroke-opacity="0.45"/>
<ellipse cx="246.40" cy="289.80" rx="36.00" ry="7.60" transform="rotate(-7.40 246.40 289.80)" fill="#f0a000" fill-opacity="0.1" stroke="#a86400" stroke-width="0.6" stroke-opacity="0.45"/>
<ellipse cx="255.70" cy="365.40" rx="70.50" ry="15.50" transform="rotate(-7.40 255.70 365.40)" fill="none" stroke="#b06c00" stroke-width="0.6" stroke-opacity="0.35"/>
<ellipse cx="249.00" cy="308.50" rx="74.00" ry="18.00" transform="rotate(-7.40 249.00 308.50)" fill="none" stroke="#b5a663" stroke-width="0.8"/>
<path d="M229.4 331 L248.5 318.2 L293.8 318 L299.2 364.8 L276 377.8 L233.7 377 Z M233.7 377 L255.6 364.8" fill="none" stroke="#f3e3bd" stroke-width="0.7" stroke-opacity="0.75" stroke-linejoin="round"/>
<path d="M229 344 L227.3 330.5 L234 326.5" fill="none" stroke="#4a28c8" stroke-width="1.1"/>
<path d="M282 317.5 L293 317.5 L295 332" fill="none" stroke="#4a28c8" stroke-width="1.1"/>
<path d="M241.4 249 L302.8 249 L308.5 289 L277.5 289 L283.5 333 L313.7 333 L317.3 364.6 L255.6 364.6 Z" fill="none" stroke="#7fc36e" stroke-width="1.5" stroke-linejoin="round"/>
<path d="M250 309.2 L311 309.2" fill="none" stroke="#d8c48a" stroke-width="0.7" stroke-opacity="0.8"/>
<path d="M248.7 304.6 L253 315.8 L252.2 318.5 L254.1 340 L256.6 364.6 L254.6 364.6 L251.5 340 L249 319 L247.1 316.4 Z" fill="#bea25a"/>
<path d="M244.7 274.6 L246.9 283.2 L243.2 283.5 Z" fill="#cfd6d6"/>
<path d="M310.6 304.2 L314.9 315.6 L314.1 318.3 L316 340 L318.3 364.6 L316.3 364.6 L313.2 340 L310.9 318.8 L309 316.2 Z" fill="#bea25a"/>
<circle cx="314.1" cy="308.4" r="2.8" fill="#b7994a" stroke="#927c38" stroke-width="0.4"/>
<circle cx="316.1" cy="349" r="2.9" fill="#bfa355" stroke="#8c7836" stroke-width="0.5"/>
<circle cx="315.4" cy="348.2" r="1.1" fill="#d8c27c"/>
<path d="M318.5 349.3 L382 365" fill="none" stroke="#c2b07a" stroke-width="0.8"/>
<path d="M317.5 364.6 L333 364.6" stroke="#2222ee" stroke-width="0.8" fill="none"/>
<path d="M342.5 364.8 L331.5 362.3 L331.5 367.3 Z" fill="#1010e8"/>
<path d="M233.7 377 L226 381.6" stroke="#d8c48a" stroke-width="0.7" fill="none"/><path d="M226 381.6 L220 385.4" stroke="#2222ee" stroke-width="0.8" fill="none"/>
<path d="M213.2 389.8 L218.6 384.6 L220.8 387.8 Z" fill="#1010e8"/>
<text x="343.4" y="369.2" font-family="Liberation Sans, sans-serif" font-size="10.3" fill="#2a2af0" stroke="#2a2af0" stroke-width="0.3">X</text>
<text x="206.8" y="396.6" font-family="Liberation Sans, sans-serif" font-size="10.3" fill="#2a2af0" stroke="#2a2af0" stroke-width="0.3">Z</text>
</svg>
<div class="a" style="left:382.2px;top:355.2px;width:33.4px;height:20.4px;background:#f3f5f7;border:1px solid #c6c8ca;box-sizing:border-box"></div>
<svg width="697" height="533" viewBox="0 0 697 533"><rect x="384.8" y="357.6" width="1" height="1" fill="#9a9a9a"/><rect x="384.8" y="360.5" width="1" height="1" fill="#9a9a9a"/><rect x="384.8" y="363.4" width="1" height="1" fill="#9a9a9a"/><rect x="384.8" y="366.3" width="1" height="1" fill="#9a9a9a"/><rect x="384.8" y="369.2" width="1" height="1" fill="#9a9a9a"/><rect x="384.8" y="372.1" width="1" height="1" fill="#9a9a9a"/><rect x="387.4" y="357.6" width="1" height="1" fill="#9a9a9a"/><rect x="387.4" y="360.5" width="1" height="1" fill="#9a9a9a"/><rect x="387.4" y="363.4" width="1" height="1" fill="#9a9a9a"/><rect x="387.4" y="366.3" width="1" height="1" fill="#9a9a9a"/><rect x="387.4" y="369.2" width="1" height="1" fill="#9a9a9a"/><rect x="387.4" y="372.1" width="1" height="1" fill="#9a9a9a"/></svg>
<div class="a" style="left:396px;top:361px;font-size:8.8px;color:#222">截面</div><div class="a" id="dlg"></div><div class="a" id="dhead"></div>
<div class="a" style="left:486px;top:90.4px;font-size:10px;color:#fff">旋转</div>
<div class="sec" style="top:105.9px;height:77.0px"></div>
<div class="sec" style="top:184.8px;height:77.2px"></div>
<div class="sec" style="top:263.7px;height:124.6px"></div>
<div class="sec" style="top:389.8px;height:47.6px"></div>
<div class="sec" style="top:439.2px;height:18.4px"></div>
<div class="sec" style="top:459.7px;height:18.4px"></div>
<div class="sec" style="top:480.0px;height:18.0px"></div>
<div class="st" style="top:111.0px">截面</div>
<div class="st" style="top:190.4px">轴</div>
<div class="st" style="top:269.3px">限制</div>
<div class="st" style="top:396.2px">布尔</div>
<div class="st" style="top:445.6px">偏置</div>
<div class="st" style="top:486.0px">预览</div>
<div class="lb" style="left:488.2px;top:135.2px">选择曲线 (8)</div>
<div class="lb" style="left:473.8px;top:160.4px">指定原始曲线</div>
<div class="lb" style="left:488.2px;top:214px">指定矢量</div>
<div class="lb" style="left:473.8px;top:291.6px">开始</div>
<div class="lb" style="left:473.8px;top:312px">角度</div>
<div class="lb" style="left:473.8px;top:331.9px">结束</div>
<div class="lb" style="left:473.8px;top:352.3px">角度</div>
<div class="lb" style="left:486.8px;top:370.3px">开放轮廓智能体积</div>
<div class="lb" style="left:473.8px;top:418.1px">布尔</div>
<div class="a" style="left:474px;top:232.1px;width:161.6px;height:22.8px;background:#fdd76c"></div>
<div class="lb" style="left:473.8px;top:239.4px">指定点</div>
<div class="box" style="top:286.1px;height:18.6px"></div>
<div class="box" style="top:306.8px;height:17.9px"></div>
<div class="box" style="top:326.4px;height:18.7px"></div>
<div class="box" style="top:347.2px;height:17.8px"></div>
<div class="box" style="top:413.1px;height:18.5px"></div>
<div class="btn" style="left:630.4px;top:131.3px;width:17.4px;height:17.4px"></div>
<div class="btn" style="left:649.5px;top:131.3px;width:17.5px;height:17.4px"></div>
<div class="btn" style="left:668.5px;top:128.2px;width:23.4px;height:22.2px"></div>
<div class="btn" style="left:668.5px;top:153.1px;width:23.4px;height:22.3px"></div>
<div class="btn" style="left:618.1px;top:210px;width:17.6px;height:17.3px"></div>
<div class="btn" style="left:637.1px;top:210px;width:17.6px;height:17.3px"></div>
<div class="btn" style="left:656.2px;top:207.2px;width:35.8px;height:22.9px"></div>
<div class="btn" style="left:637.1px;top:234.7px;width:17.6px;height:17.5px"></div>
<div class="a" style="left:656.2px;top:232px;width:35.8px;height:23px;background:#fbeaa9;border:1px solid #f6dc8c;box-sizing:border-box"></div>
<div class="a" style="left:679px;top:232.5px;width:1px;height:22px;background:#f5d98a"></div>
<div class="a" style="left:474.3px;top:369.5px;width:9px;height:9px;border:1px solid #a8a8a8;box-sizing:border-box;background:linear-gradient(135deg,#dcdcdc,#f8f8f8 70%)"></div>
<div class="lb" style="left:607.4px;top:291.6px;font-size:9px">值</div>
<div class="lb" style="left:607.4px;top:332px;font-size:9px">值</div>
<div class="lb" style="left:607px;top:418.1px;font-size:9px">无</div>
<div class="lb" style="left:592.6px;top:311.2px;font-size:10px;letter-spacing:-0.5px;color:#333">0</div>
<div class="lb" style="left:592.6px;top:351.6px;font-size:10px;letter-spacing:-0.5px;color:#333">360</div>
<div class="lb" style="left:651px;top:311.3px;font-size:9.6px;color:#333">deg</div>
<div class="lb" style="left:651px;top:351.7px;font-size:9.6px;color:#333">deg</div>
<div class="a" style="left:565.2px;top:505.8px;width:39.6px;height:18.2px;background:#a9d4ef;border:1px solid #5aa8de;box-sizing:border-box"></div>
<div class="a" style="left:608.8px;top:505.8px;width:39px;height:18.2px;background:#d3d3d3;border:1px solid #bdbdbd;box-sizing:border-box"></div>
<div class="a" style="left:652.2px;top:505.8px;width:39px;height:18.2px;background:#d3d3d3;border:1px solid #bdbdbd;box-sizing:border-box"></div>
<div class="lb" style="left:567.6px;top:510.6px;word-spacing:2px;font-size:8.7px">&lt; 确定 &gt;</div>
<div class="lb" style="left:619.4px;top:510.6px">应用</div>
<div class="lb" style="left:662.8px;top:510.6px">取消</div>
<div class="a" style="left:695.6px;top:329px;width:1.4px;height:39.6px;background:#5c5c5c"></div>
<svg width="697" height="533" viewBox="0 0 697 533">
<polygon points="472.79,90.54 473.00,89.48 474.80,89.48 475.01,90.54 476.06,90.98 476.96,90.37 478.23,91.64 477.62,92.54 478.06,93.59 479.12,93.80 479.12,95.60 478.06,95.81 477.62,96.86 478.23,97.76 476.96,99.03 476.06,98.42 475.01,98.86 474.80,99.92 473.00,99.92 472.79,98.86 471.74,98.42 470.84,99.03 469.57,97.76 470.18,96.86 469.74,95.81 468.68,95.60 468.68,93.80 469.74,93.59 470.18,92.54 469.57,91.64 470.84,90.37 471.74,90.98" fill="#fff"/>
<circle cx="473.9" cy="94.7" r="2.3" fill="#5c8983"/>
<circle cx="473.9" cy="94.7" r="0.6" fill="#b8d0cc"/>
<path d="M677.5 91.5 A4 4 0 1 1 673 96" fill="none" stroke="#fff" stroke-width="1.2"/>
<polygon points="671.5,95.8 674.5,95.8 673.1,93.3" fill="#fff"/>
<path d="M687.6 91.3 l8.2 8 M695.8 91.3 l-8.2 8" stroke="#fff" stroke-width="1.3"/>
<path d="M686.6 117.5 l3.7 -4.6 l3.7 4.6" fill="none" stroke="#3a97d0" stroke-width="1.5"/>
<path d="M686.6 196.5 l3.7 -4.6 l3.7 4.6" fill="none" stroke="#3a97d0" stroke-width="1.5"/>
<path d="M686.6 275.2 l3.7 -4.6 l3.7 4.6" fill="none" stroke="#3a97d0" stroke-width="1.5"/>
<path d="M686.6 402.3 l3.7 -4.6 l3.7 4.6" fill="none" stroke="#3a97d0" stroke-width="1.5"/>
<path d="M686.6 446.0 l3.7 4.6 l3.7 -4.6" fill="none" stroke="#3a97d0" stroke-width="1.5"/>
<path d="M686.6 466.4 l3.7 4.6 l3.7 -4.6" fill="none" stroke="#3a97d0" stroke-width="1.5"/>
<path d="M686.6 486.4 l3.7 4.6 l3.7 -4.6" fill="none" stroke="#3a97d0" stroke-width="1.5"/>
<path d="M475.9 139.5 l2.7 2.7 l4.2 -6.3" fill="none" stroke="#21c232" stroke-width="2.5" stroke-linecap="butt" stroke-linejoin="miter"/>
<path d="M475.9 218.3 l2.7 2.7 l4.2 -6.3" fill="none" stroke="#21c232" stroke-width="2.5" stroke-linecap="butt" stroke-linejoin="miter"/>
<polygon points="682.8,293.7 687.8,293.7 685.3,296.7" fill="#1a1a1a"/>
<polygon points="683.0,314.5 688.0,314.5 685.5,317.5" fill="#1a1a1a"/>
<polygon points="682.8,334.1 687.8,334.1 685.3,337.1" fill="#1a1a1a"/>
<polygon points="683.0,354.7 688.0,354.7 685.5,357.7" fill="#1a1a1a"/>
<polygon points="682.8,420.8 687.8,420.8 685.3,423.8" fill="#1a1a1a"/>
<polygon points="683.2,216.9 688.2,216.9 685.7,219.9" fill="#1a1a1a"/>
<polygon points="683.2,242.0 688.2,242.0 685.7,245.0" fill="#3a97d0"/>
<rect x="597.2" y="292.2" width="5" height="6" fill="#e8e8e8" stroke="#777" stroke-width="0.7"/><rect x="592.8" y="291.8" width="4.2" height="7.4" fill="#d8dce8" stroke="#666" stroke-width="0.7"/><path d="M592.5 292.2 v7.8" stroke="#4060d0" stroke-width="1.1"/><path d="M592.4 291.6 q4.4 -4.6 9.4 -0.4" fill="none" stroke="#d83030" stroke-width="1.2"/>
<rect x="597.2" y="332.4" width="5" height="6" fill="#e8e8e8" stroke="#777" stroke-width="0.7"/><rect x="592.8" y="332.0" width="4.2" height="7.4" fill="#d8dce8" stroke="#666" stroke-width="0.7"/><path d="M592.5 332.4 v7.8" stroke="#4060d0" stroke-width="1.1"/><path d="M592.4 331.8 q4.4 -4.6 9.4 -0.4" fill="none" stroke="#d83030" stroke-width="1.2"/>
<circle cx="600.2" cy="423.6" r="2.9" fill="#2aa898" stroke="#1a5a58" stroke-width="0.8"/>
<path d="M596.2 417.4 l0.9 1.9 l2 -0.6 l-1.2 1.7 l1.4 1.5 l-2.1 0 l-0.8 2 l-0.7 -2 l-2.1 0.2 l1.6 -1.4 l-1 -1.9 l1.9 0.7 z" fill="#f4f040" stroke="#80c030" stroke-width="0.5"/>
<path d="M634.6 136.1 l9.4 7.4" stroke="#222" stroke-width="0.9"/><path d="M636.4 143.5 l5.6 -7" stroke="#1c1ce0" stroke-width="1.2"/><polygon points="643.4,134.9 640.0,136.5 642.8,138.7" fill="#1c1ce0"/><polygon points="635.0,145.1 635.6,141.5 638.4,143.7" fill="#1c1ce0"/>
<path d="M622.3 214.8 l9.4 7.4" stroke="#222" stroke-width="0.9"/><path d="M624.1 222.2 l5.6 -7" stroke="#1c1ce0" stroke-width="1.2"/><polygon points="631.1,213.6 627.7,215.2 630.5,217.4" fill="#1c1ce0"/><polygon points="622.7,223.8 623.3,220.2 626.1,222.4" fill="#1c1ce0"/>
<polygon points="653.2,135 660.6,137 660.6,146.4 653.2,144.4" fill="#d4d4d0" stroke="#777" stroke-width="0.6"/>
<path d="M655.6 135.6 v9.4 M658.2 136.4 v9.4 M653.2 138.2 l7.4 2 M653.2 141.4 l7.4 2" stroke="#888" stroke-width="0.5"/>
<path d="M660.6 134.4 l1 2.2 l2.4 0.2 l-1.8 1.6 l0.6 2.4 l-2.2 -1.3 l-2.200000000000001 1.3 l0.6 -2.4 l-1.8 -1.6 l2.4 -0.2 z" fill="#f6ee40" stroke="#c8c020" stroke-width="0.3"/>
<path d="M672.6 146.4 v-14.6" stroke="#2828e0" stroke-width="1"/><polygon points="672.6,130.6 671.2,133.6 674,133.6" fill="#2828e0"/>
<path d="M672.4 134.2 h8" stroke="#2828e0" stroke-width="0.9"/>
<path d="M680.2 132 v15" stroke="#30b0a8" stroke-width="0.9" stroke-dasharray="1 0.9"/>
<circle cx="685.2" cy="142.2" r="2.6" fill="none" stroke="#2828e0" stroke-width="0.9"/>
<path d="M686 138.6 h2.6" stroke="#2828e0" stroke-width="0.9"/>
<path d="M672.4 134 q6 -0.6 10.4 3.2 q4.6 4 6.2 10" fill="none" stroke="#e02828" stroke-width="1.1"/>
<path d="M672.2 171.4 q7 -1.2 8.6 -6.4 q0.8 -3 -1.4 -5.400000000000006" fill="none" stroke="#333" stroke-width="1"/>
<path d="M675.6 158 l9.4 3.8" stroke="#e02020" stroke-width="0.9"/><circle cx="675.4" cy="157.8" r="1.2" fill="#e02020"/>
<polygon points="688,162.8 684.4,163.4 685.6,160.4" fill="#e02020"/>
<path d="M646.6 223.6 v-8" stroke="#e02020" stroke-width="1"/><polygon points="646.6,212.6 645,216.2 648.2,216.2" fill="#e02020"/>
<path d="M640.6 218.400000000000006 q-0.6 4.4 3.600000000000001 4.6 l-0.6 -1.6 l3 2.2 l-3.4 1.6 l0.2 -1" fill="#f08010" stroke="#f08010" stroke-width="0.8" stroke-linejoin="round"/>
<path d="M646.4 224.6 h6" stroke="#222" stroke-width="1" stroke-dasharray="1.4 0.8"/>
<path d="M666.9 224.6 v-11" stroke="#c02020" stroke-width="1.3"/><polygon points="666.9,210.4 664.6,215.4 669.2,215.4" fill="#e01818"/>
<polygon points="673.4,213.8 676.6,214.6 674,218 676,218.4 668.8,225.6 671.6,220 669.6,219.6" fill="#f4e040" stroke="#9a9020" stroke-width="0.5"/>
<rect x="639.2" y="236.8" width="13.4" height="13.2" fill="none" stroke="#bdbdbd" stroke-width="0.7"/>
<path d="M644.6 241.2 h5.2 M647.2 238.6 v5.2" stroke="#222" stroke-width="1"/>
<path d="M640.2 245.2 q-0.2 3.6 3.6 3.6 l2.4 -1" fill="none" stroke="#f08010" stroke-width="1.3"/>
<path d="M648.8 249.2 h3.2" stroke="#222" stroke-width="1" stroke-dasharray="1.2 0.7"/>
<path d="M659.4 243.4 h5.400000000000001 M670.2 243.4 h6 M667.6 235.2 v5 M667.6 246.4 v5.6" stroke="#6e6030" stroke-width="0.9"/>
<circle cx="667.6" cy="243.4" r="1.2" fill="#d83020"/>
<polygon points="645.5,246.3 653.8,256.4 651.3,257.2 654.8,284.6 646.2,258.3 642,259.3" fill="#fb2d2f"/>
<text x="424.2" y="477.4" font-family="Liberation Sans, sans-serif" font-size="15.2" font-weight="bold" fill="#fff" stroke="#1b8bd8" stroke-width="3.2" stroke-linejoin="round" paint-order="stroke" style="filter:drop-shadow(0 0 0.7px #fff) drop-shadow(0 0 0.7px #fff)">www.rjzxw.com</text>
</svg>
</div>
</body></html>
